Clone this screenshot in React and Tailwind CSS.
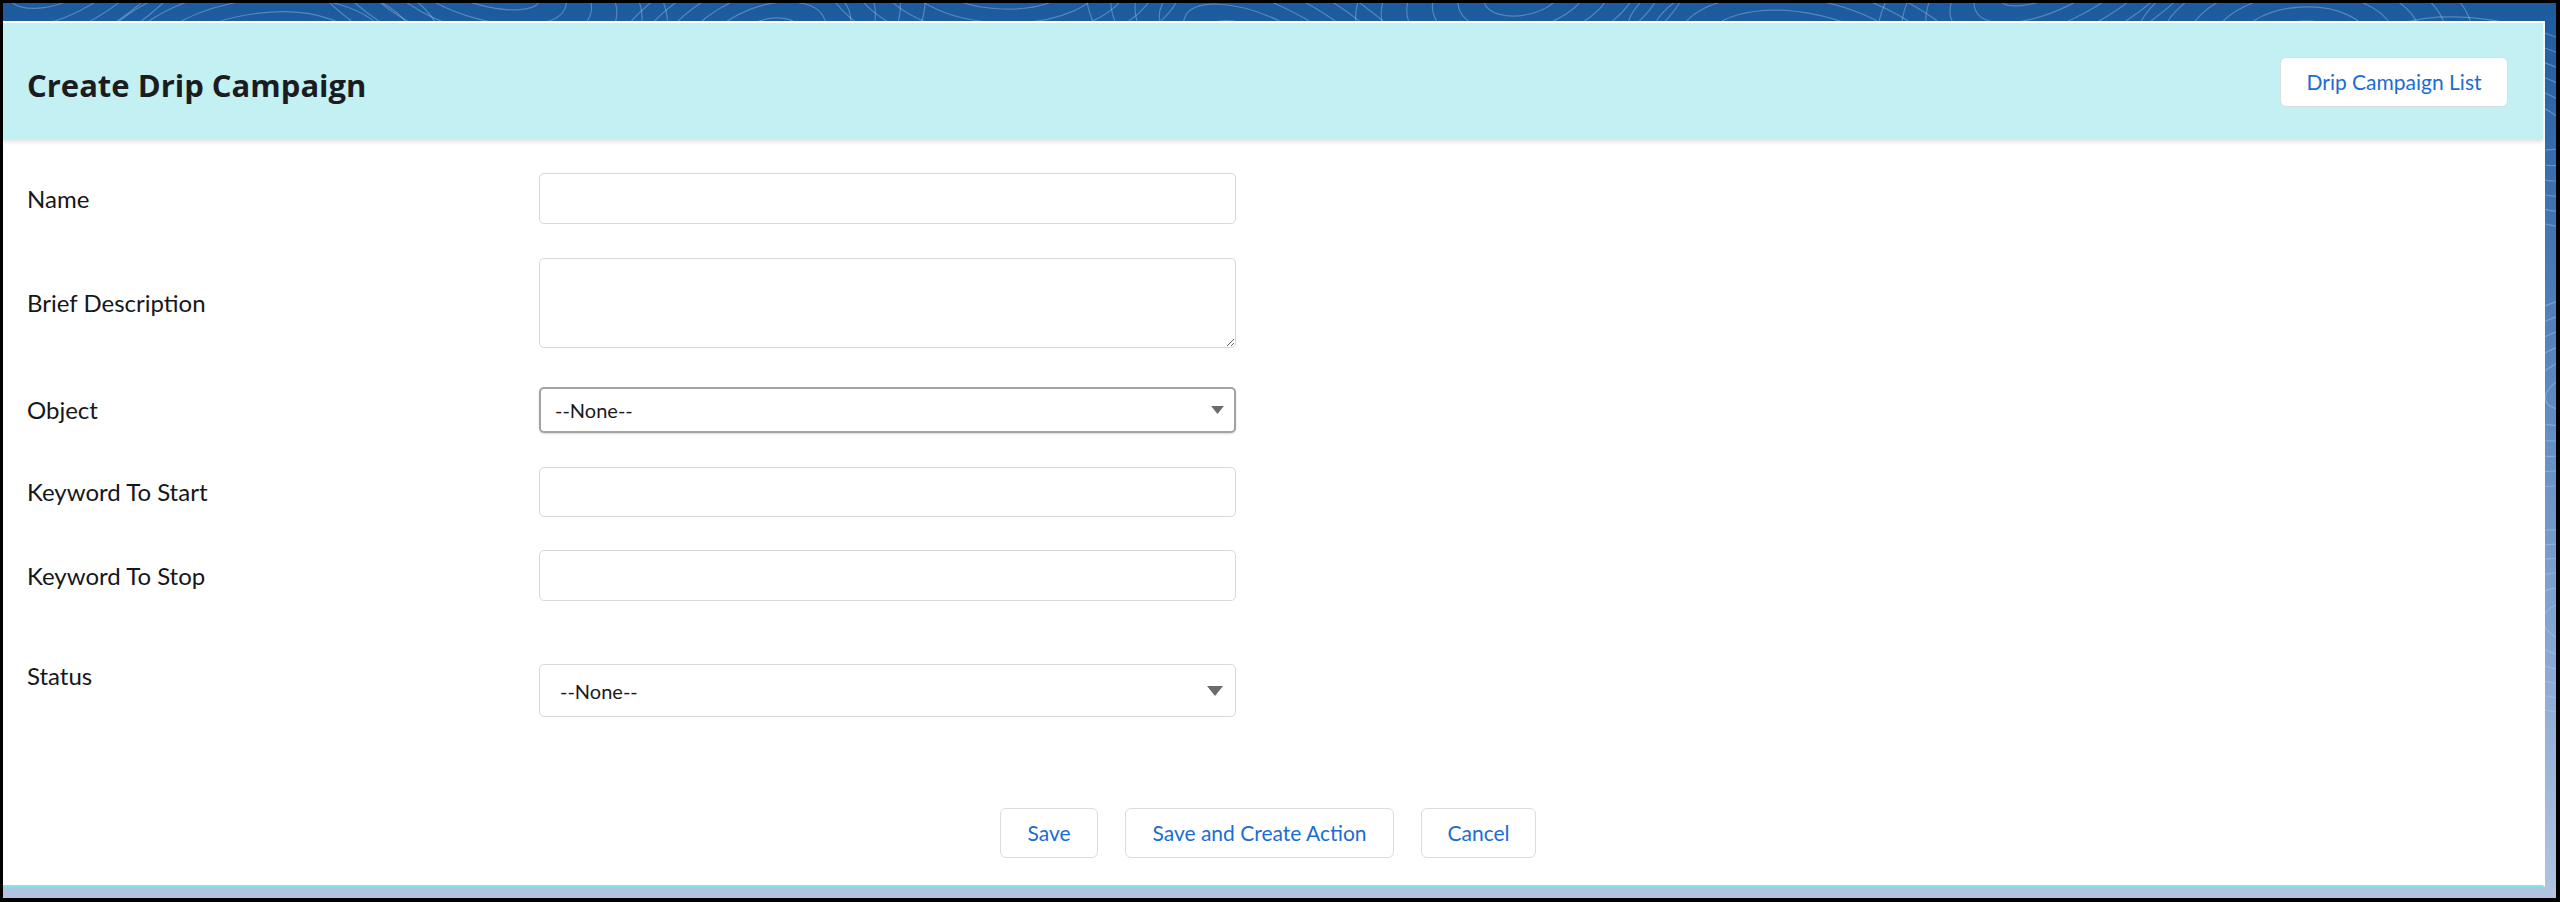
import React from "react";

const labelCls = "w-[512px] shrink-0 text-[24px] leading-[32px] text-[#16171b]";
const inputCls = "w-[697px] shrink-0 rounded-[5px] border border-[#d8d8d8] bg-white";

function Arrow({ big }) {
  return (
    <svg width={big ? 16 : 13} height={big ? 10 : 8} viewBox="0 0 16 10" className="shrink-0">
      <path d="M0 0 L16 0 L8 10 Z" fill="#6b6b6b" />
    </svg>
  );
}

function Topo() {
  const lines = [];
  const centers = [
    [60, -40], [260, 60], [480, -20], [760, 40], [1000, -30], [1260, 50], [1520, -10],
    [1800, 60], [2050, -30], [2300, 40], [2520, 120], [2600, 380], [2580, 620],
  ];
  centers.forEach(([cx, cy], i) => {
    for (let k = 0; k < 6; k++) {
      const rx = 40 + k * 26 + (i % 3) * 10;
      const ry = 22 + k * 14;
      lines.push(
        <ellipse
          key={`${i}-${k}`}
          cx={cx}
          cy={cy}
          rx={rx}
          ry={ry}
          fill="none"
          stroke="rgba(190,215,245,0.35)"
          strokeWidth="1.2"
          transform={`rotate(${(i * 23) % 60 - 30} ${cx} ${cy})`}
        />
      );
    }
  });
  return (
    <svg className="absolute inset-0 h-full w-full" viewBox="0 0 2553 895" preserveAspectRatio="none">
      {lines}
    </svg>
  );
}

export default function App() {
  return (
    <div
      className="w-[2560px] h-[902px] bg-black pt-[3px] pl-[3px] pr-[4px] pb-[4px]"
      style={{ fontFamily: "Lato, 'Open Sans', sans-serif" }}
    >
      <div className="relative h-full overflow-hidden bg-linear-to-b from-[#1b5a9e] via-[#6690c6] to-[#b1c5e2] pt-[18px] pr-[11px] pb-[11px]">
        <Topo />
        <div className="relative z-10 flex h-full flex-col bg-white border-t-2 border-r-2 border-t-white border-r-white border-b-2 border-b-[#7ee6ec]">
          <div className="flex h-[117px] shrink-0 items-center justify-between bg-[#c3f0f3] pl-[24px] pr-[35px] shadow-[0_2px_4px_rgba(0,0,0,0.12)]">
            <h1
              className="pt-[8px] text-[31px] font-bold text-[#1c1c1e]"
              style={{ fontFamily: "'Open Sans', Lato, sans-serif" }}
            >
              Create Drip Campaign
            </h1>
            <button className="flex h-[50px] w-[228px] items-center justify-center rounded-[6px] border border-[#dcdcdc] bg-white text-[21px] text-[#1b6dd3]">
              Drip Campaign List
            </button>
          </div>

          <div className="flex flex-col pl-[24px] pt-[33px]">
            <div className="flex items-center">
              <div className={labelCls}>Name</div>
              <input className={`${inputCls} h-[51px] px-3 text-[20px] outline-none`} />
            </div>

            <div className="mt-[34px] flex items-center">
              <div className={labelCls}>Brief Description</div>
              <textarea className={`${inputCls} h-[90px] px-3 py-2 text-[20px] outline-none`} />
            </div>

            <div className="mt-[39px] flex items-center">
              <div className={labelCls}>Object</div>
              <div className="flex h-[46px] w-[697px] shrink-0 items-center justify-between rounded-[5px] border-2 border-[#a3a3a3] bg-white pl-[14px] pr-[10px] shadow-[0_1px_2px_rgba(0,0,0,0.15)]">
                <span className="text-[20px] text-[#1a1a1a]">--None--</span>
                <Arrow />
              </div>
            </div>

            <div className="mt-[34px] flex items-center">
              <div className={labelCls}>Keyword To Start</div>
              <input className={`${inputCls} h-[50px] px-3 text-[20px] outline-none`} />
            </div>

            <div className="mt-[33px] flex items-center">
              <div className={labelCls}>Keyword To Stop</div>
              <input className={`${inputCls} h-[51px] px-3 text-[20px] outline-none`} />
            </div>

            <div className="mt-[47px] flex items-start">
              <div className={`${labelCls} mt-[12px]`}>Status</div>
              <div className="mt-[16px] flex h-[53px] w-[697px] shrink-0 items-center justify-between rounded-[5px] border border-[#d8d8d8] bg-white pl-[20px] pr-[12px]">
                <span className="text-[20px] text-[#1a1a1a]">--None--</span>
                <Arrow big />
              </div>
            </div>

            <div className="mt-[91px] flex justify-center gap-[27px] pr-[34px]">
              <button className="h-[50px] w-[98px] rounded-[6px] border border-[#dcdcdc] bg-white text-[21px] text-[#1b6dd3]">
                Save
              </button>
              <button className="h-[50px] w-[269px] rounded-[6px] border border-[#dcdcdc] bg-white text-[21px] text-[#1b6dd3]">
                Save and Create Action
              </button>
              <button className="h-[50px] w-[115px] rounded-[6px] border border-[#dcdcdc] bg-white text-[21px] text-[#1b6dd3]">
                Cancel
              </button>
            </div>
          </div>
        </div>
      </div>
    </div>
  );
}
